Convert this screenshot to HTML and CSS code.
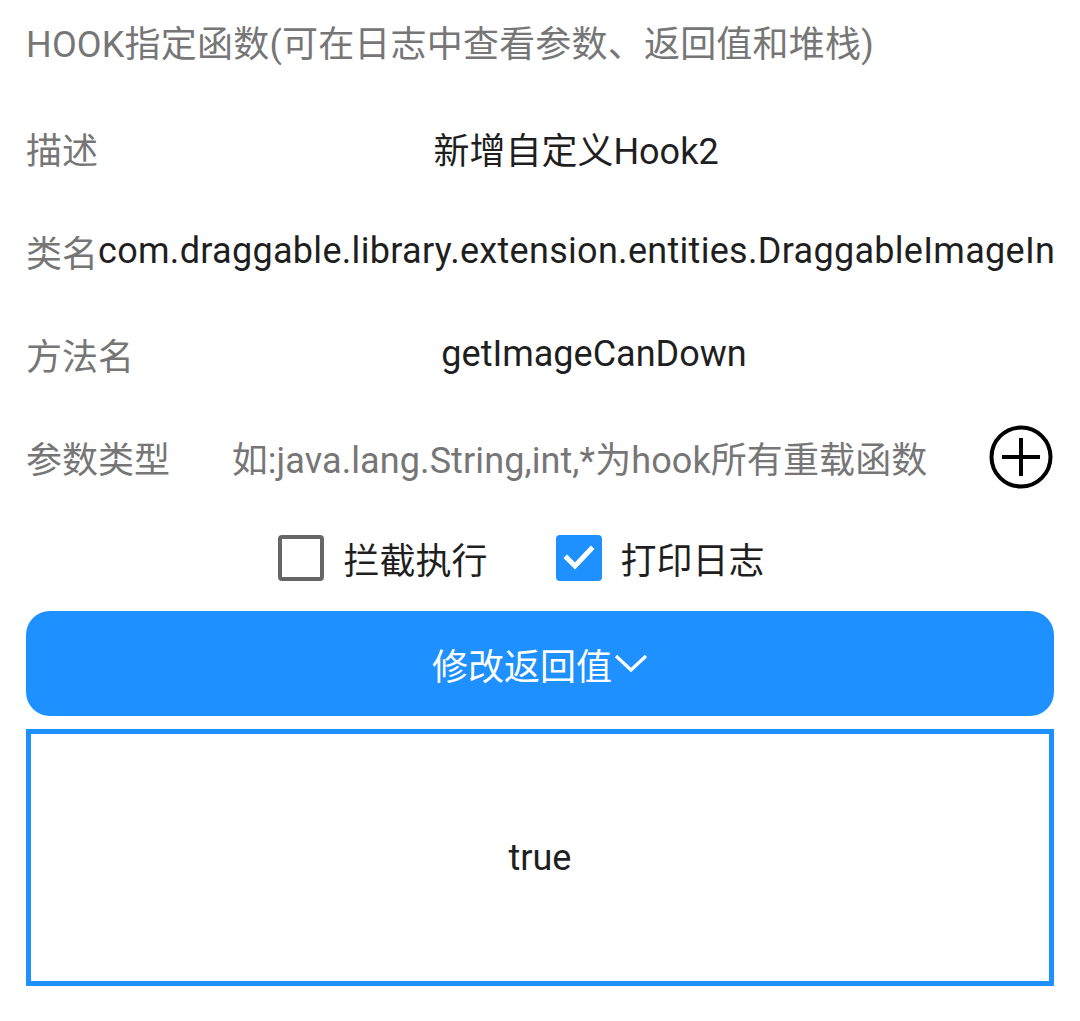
FILE: index.html
```html
<!DOCTYPE html>
<html lang="zh-CN">
<head>
<meta charset="utf-8">
<title>HOOK指定函数</title>
<link rel="stylesheet" href="styles.css">
</head>
<body>
<div class="page">
  <div class="title">HOOK指定函数(可在日志中查看参数、返回值和堆栈)</div>

  <div class="row">
    <span class="label">描述</span>
    <span class="value center">新增自定义Hook2</span>
  </div>

  <div class="row">
    <span class="label">类名</span>
    <span class="value clip">com.draggable.library.extension.entities.DraggableImageIn</span>
  </div>

  <div class="row">
    <span class="label">方法名</span>
    <span class="value center">getImageCanDown</span>
  </div>

  <div class="row">
    <span class="label">参数类型</span>
    <span class="value center hint">如:java.lang.String,int,*为hook所有重载函数</span>
    <svg class="plus" width="64" height="64" viewBox="0 0 64 64" aria-hidden="true">
      <circle cx="32" cy="32" r="29.5" fill="none" stroke="#000" stroke-width="4"/>
      <line x1="13" y1="32" x2="51" y2="32" stroke="#000" stroke-width="4"/>
      <line x1="32" y1="13" x2="32" y2="51" stroke="#000" stroke-width="4"/>
    </svg>
  </div>

  <div class="checks">
    <label class="check">
      <span class="box"></span>
      <span class="check-text">拦截执行</span>
    </label>
    <label class="check">
      <span class="box checked">
        <svg width="46" height="46" viewBox="0 0 46 46" aria-hidden="true">
          <polyline points="11,23 19,31 35,14" fill="none" stroke="#fff" stroke-width="5" stroke-linecap="square"/>
        </svg>
      </span>
      <span class="check-text">打印日志</span>
    </label>
  </div>

  <div class="button">
    <span>修改返回值</span>
    <svg class="chev" width="34" height="36" viewBox="0 0 34 36" aria-hidden="true">
      <polyline points="2,9 17,23 32,9" fill="none" stroke="#fff" stroke-width="3.2"/>
    </svg>
  </div>

  <div class="result">true</div>
</div>
</body>
</html>
```

FILE: styles.css
```css
html, body {
  margin: 0;
  padding: 0;
  background: #ffffff;
}

body {
  font-family: Roboto, "Noto Sans CJK SC", sans-serif;
  font-size: 36px;
  color: #1f1f1f;
}

.page {
  width: 1080px;
  padding: 0 26px;
  box-sizing: border-box;
}

.title {
  color: #767676;
  line-height: 42px;
  padding-top: 24px;
  margin-bottom: 30px;
  white-space: nowrap;
  letter-spacing: 0.2px;
}

.row {
  display: flex;
  align-items: center;
  height: 103px;
}

.label {
  color: #767676;
  white-space: nowrap;
  flex: none;
}

.value {
  flex: 1;
  min-width: 0;
  white-space: nowrap;
  color: #1f1f1f;
}

.value.center {
  text-align: center;
}

.value.clip {
  letter-spacing: 0.3px;
}

.value.hint {
  color: #767676;
  letter-spacing: 0.1px;
}

.plus {
  flex: none;
  margin-right: 1px;
}

.checks {
  display: flex;
  justify-content: center;
  align-items: center;
  gap: 68px;
  height: 103px;
  padding-right: 37px;
  margin-top: -2px;
}

.check {
  display: flex;
  align-items: center;
  gap: 19px;
}

.box {
  width: 38px;
  height: 38px;
  border: 4px solid #666666;
  border-radius: 4px;
  display: block;
}

.box.checked {
  width: 46px;
  height: 46px;
  border: none;
  background: #1e90ff;
  border-radius: 4px;
}

.box.checked svg {
  display: block;
}

.check-text {
  color: #1f1f1f;
}

.button {
  height: 105px;
  background: #1e90ff;
  border-radius: 24px;
  color: #ffffff;
  display: flex;
  justify-content: center;
  align-items: center;
  margin-top: 2px;
  margin-bottom: 13px;
}

.chev {
  display: block;
  margin-left: 2px;
  margin-top: 2px;
}

.result {
  height: 257px;
  box-sizing: border-box;
  border: 5px solid #1e90ff;
  display: flex;
  justify-content: center;
  align-items: center;
  color: #1f1f1f;
}
```
